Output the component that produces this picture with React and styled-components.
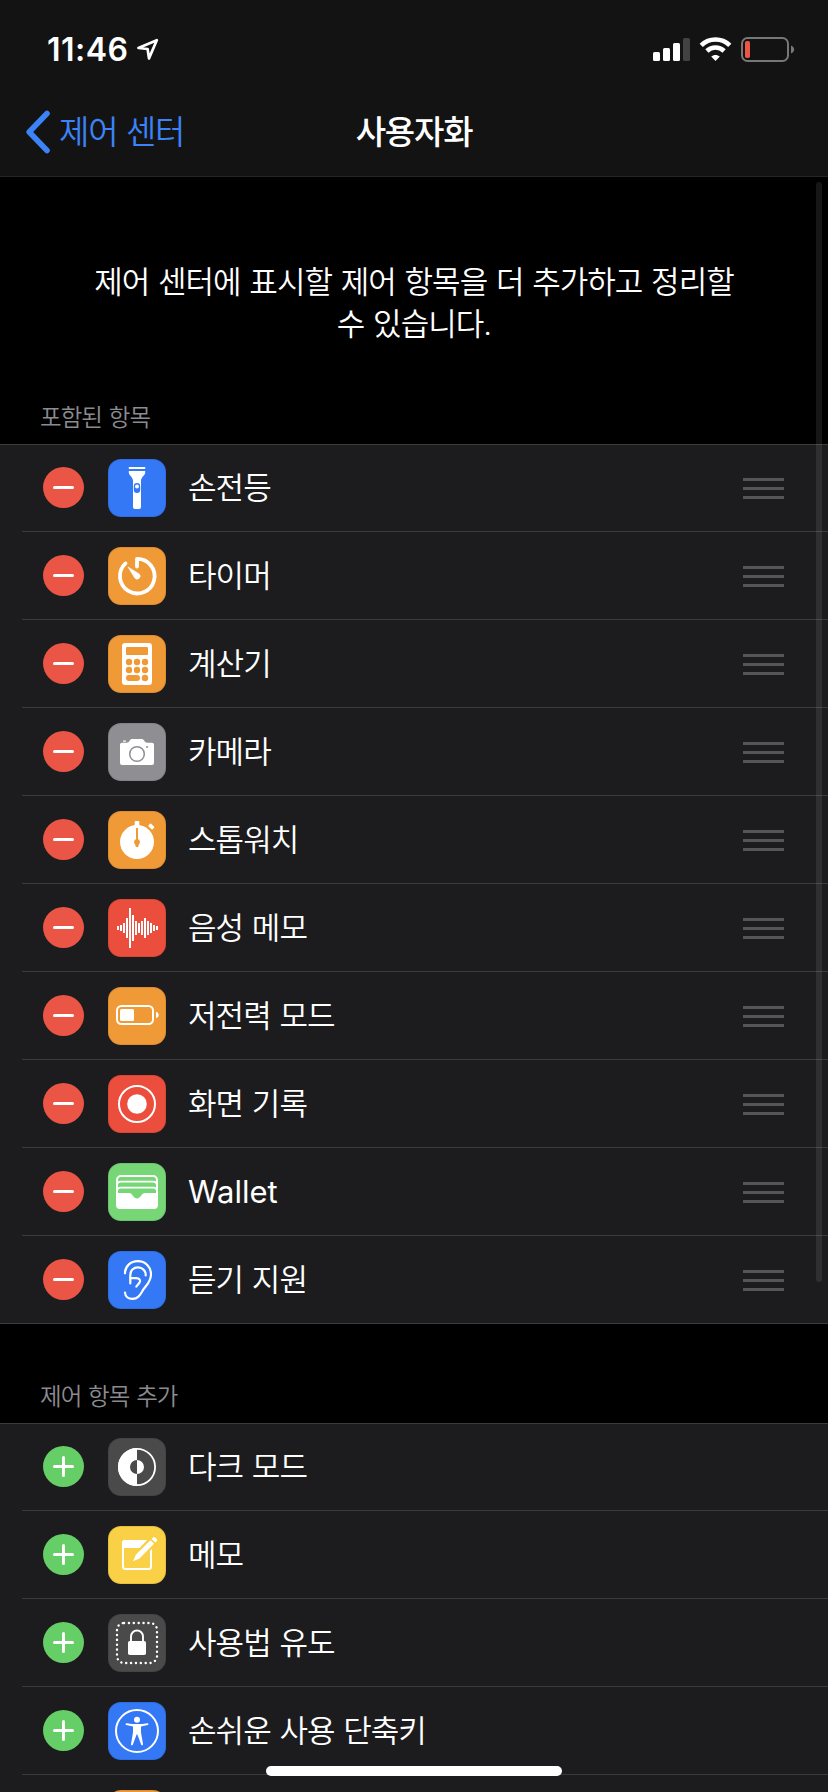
import React from 'react';
import styled, { createGlobalStyle } from 'styled-components';


const colors = {
	blue: '#3478f6',
	orange: '#f09a37',
	gray: '#8e8e93',
	red: '#eb4e3d',
	green: '#77d777',
	dark: '#4a4a4a',
	yellow: '#f9d046',
};

const waveBars = [2, 3, 5, 10, 20, 13, 7, 5, 7, 10, 7, 5, 3, 2];

const icons = {
	flashlight: (
		<>
			<rect x="20.8" y="8" width="16.4" height="2" rx="0.6" fill="#fff" />
			<path d="M20.8 12h16.4v1.2c0 3.4-4.2 4.6-4.2 8.8v26.2a1.8 1.8 0 0 1-1.8 1.8h-4.4a1.8 1.8 0 0 1-1.8-1.8V22c0-4.2-4.2-5.4-4.2-8.8z" fill="#fff" />
			<rect x="25.8" y="24" width="6.4" height="10" rx="3.2" fill={colors.blue} />
			<circle cx="29" cy="27.6" r="2" fill="#fff" />
		</>
	),
	timer: (
		<>
			<path d="M29 19.5V11.8A17.3 17.3 0 1 1 17.5 16.4" fill="none" stroke="#fff" strokeWidth="3.8" strokeLinecap="round" strokeLinejoin="round" />
			<path d="M20 20l11.2 6.9a3 3 0 0 1-4.3 4.3z" fill="#fff" stroke="#fff" strokeWidth="0.6" strokeLinejoin="round" />
		</>
	),
	calculator: (
		<>
			<rect x="14" y="8" width="30" height="42" rx="3.2" fill="#fff" />
			<g fill={colors.orange}>
				<rect x="18" y="12" width="22" height="8" rx="1" />
				{[27, 35].map((y) => [21, 29, 37].map((x) => <circle key={`${x}-${y}`} cx={x} cy={y} r="3.2" />))}
				<rect x="18" y="40" width="14" height="6" rx="3" />
				<circle cx="37" cy="43" r="3.2" />
			</g>
		</>
	),
	camera: (
		<>
			<path d="M14 19.8h4.5c1.8 0 2.4-.8 3.2-2.2.6-1.1 1.3-1.6 2.6-1.6h9.2c1.3 0 2 .5 2.7 1.6.8 1.4 1.5 2.2 3.3 2.2H44a2 2 0 0 1 2 2V40a2 2 0 0 1-2 2H14a2 2 0 0 1-2-2V21.8a2 2 0 0 1 2-2z" fill="#fff" />
			<rect x="15" y="17.4" width="3" height="1.4" rx="0.4" fill="#fff" />
			<circle cx="29" cy="31" r="7.3" fill="none" stroke={colors.gray} strokeWidth="1.5" />
			<circle cx="39" cy="24" r="1" fill={colors.gray} />
		</>
	),
	stopwatch: (
		<>
			<circle cx="29" cy="31" r="17" fill="#fff" />
			<rect x="26.7" y="10" width="4.6" height="6" rx="0.8" fill="#fff" />
			<rect x="40.5" y="13.7" width="5.6" height="3.6" rx="0.8" transform="rotate(43 43.3 15.5)" fill="#fff" />
			<path d="M28 17h2v11.2a3 3 0 0 1 1 5L30 36h-2l-1-2.8a3 3 0 0 1 1-5z" fill={colors.orange} />
		</>
	),
	voice: (
		<g fill="#fff">
			{waveBars.map((h, i) => <rect key={i} x={9 + i * 3} y={29 - h} width="2" height={h * 2} />)}
		</g>
	),
	battery: (
		<>
			<rect x="9" y="19" width="36" height="18" rx="4.5" fill="none" stroke="#fff" strokeWidth="2" />
			<rect x="12" y="22" width="14" height="12" rx="1.5" fill="#fff" />
			<path d="M48 24.8c3.6.9 3.6 5.5 0 6.4z" fill="#fff" />
		</>
	),
	record: (
		<>
			<circle cx="29" cy="29" r="18" fill="none" stroke="#fff" strokeWidth="2" />
			<circle cx="29" cy="29" r="9.8" fill="#fff" />
		</>
	),
	wallet: (
		<>
			<path d="M9 32V17a4 4 0 0 1 4-4h32a4 4 0 0 1 4 4v15" fill="none" stroke="#fff" strokeWidth="2" />
			<path d="M9 22.5c0-2.7 1.3-3.8 4-3.8h32c2.7 0 4 1.1 4 3.8M9 28.5c0-2.7 1.3-3.8 4-3.8h32c2.7 0 4 1.1 4 3.8" fill="none" stroke="#fff" strokeWidth="1.8" />
			<path d="M8 30h13c3.8 0 4 5.4 8 5.4s4.2-5.4 8-5.4h13v12a4 4 0 0 1-4 4H12a4 4 0 0 1-4-4z" fill="#fff" />
		</>
	),
	ear: (
		<g fill="none" stroke="#fff" strokeWidth="2.2" strokeLinecap="round" strokeLinejoin="round">
			<path d="M17 22.3C17 15.3 22.5 10.2 29.8 10.2c7.7 0 13.2 5.6 13.2 13.2 0 7-4.6 10.6-7.4 14.8-2.9 4.3-4.6 9.7-11.1 9.7-4.3 0-7.3-2.6-7.5-6.4" />
			<path d="M37.7 24.5c.3-4.7-3.1-8.2-7.7-8.2s-7.7 3.2-7.7 7.6V32.5" />
			<path d="M22.3 27.2h5.7c3.7 0 5.1 2.2 3.4 4.6L28.3 35.6" />
		</g>
	),
	darkMode: (
		<>
			<circle cx="29" cy="29" r="18.1" fill="none" stroke="#fff" strokeWidth="1.8" />
			<path d="M29 10a19 19 0 0 0 0 38V36a7 7 0 0 1 0-14z" fill="#fff" />
			<path d="M29 22a7 7 0 0 1 0 14z" fill="#fff" />
		</>
	),
	notes: (
		<>
			<rect x="15" y="15" width="28" height="28" rx="2.5" fill="none" stroke="#fff" strokeWidth="2" />
			<path d="M14 22v-5a3 3 0 0 1 3-3h24a3 3 0 0 1 3 3v5z" fill="#fff" />
			<path d="M24 36.5L28 27 45 9.5l5.5 5.5L33 32.5z" fill={colors.yellow} stroke={colors.yellow} strokeWidth="2" />
			<path d="M25 35.3l2.8-6.6 14.6-14.5 3.6 3.6-14.5 14.6zM43.6 13l1.5-1.4c1.6-1.6 5.2 1.9 3.6 3.6l-1.5 1.4z" fill="#fff" />
		</>
	),
	lock: (
		<>
			<rect x="9" y="9" width="40" height="40" rx="7" fill="none" stroke="#fff" strokeWidth="2.4" strokeLinecap="round" strokeDasharray="0.1 4.78" />
			<rect x="20" y="27" width="18" height="14" rx="1.8" fill="#fff" />
			<path d="M23 28v-5.5a6 6 0 0 1 12 0V28" fill="none" stroke="#fff" strokeWidth="1.9" />
		</>
	),
	accessibility: (
		<>
			<circle cx="29" cy="29" r="21" fill="none" stroke="#fff" strokeWidth="2" />
			<circle cx="29" cy="17.8" r="3" fill="#fff" />
			<path d="M18.6 21.2c7 1.2 13.8 1.2 20.8 0 1.2-.2 1.5 1.6.3 1.9l-6.7 1.3v6l2 11.6c.3 1.5-1.4 1.9-1.9.5l-3.7-10h-.8l-3.7 10c-.5 1.4-2.2 1-1.9-.5l2-11.6v-6l-6.7-1.3c-1.2-.3-.9-2.1.3-1.9z" fill="#fff" />
		</>
	),
};

const included = [
	{ label: '손전등', icon: 'flashlight', color: 'blue' },
	{ label: '타이머', icon: 'timer', color: 'orange' },
	{ label: '계산기', icon: 'calculator', color: 'orange' },
	{ label: '카메라', icon: 'camera', color: 'gray' },
	{ label: '스톱워치', icon: 'stopwatch', color: 'orange' },
	{ label: '음성 메모', icon: 'voice', color: 'red' },
	{ label: '저전력 모드', icon: 'battery', color: 'orange' },
	{ label: '화면 기록', icon: 'record', color: 'red' },
	{ label: 'Wallet', icon: 'wallet', color: 'green', latin: true },
	{ label: '듣기 지원', icon: 'ear', color: 'blue' },
];

const more = [
	{ label: '다크 모드', icon: 'darkMode', color: 'dark' },
	{ label: '메모', icon: 'notes', color: 'yellow' },
	{ label: '사용법 유도', icon: 'lock', color: 'dark' },
	{ label: '손쉬운 사용 단축키', icon: 'accessibility', color: 'blue' },
	{ label: '', icon: '', color: 'orange' },
];


const StatusBar = () => (
	<StatusBlock>
		<Time>11:46</Time>
		<svg width="24" height="24" viewBox="0 0 24 24">
			<path d="M2.4 11L20.8 3.2 13 21.4 11.6 12z" fill="none" stroke="#fff" strokeWidth="2.7" strokeLinejoin="round" />
		</svg>
		<StatusIcons width="142" height="26" viewBox="0 0 142 26">
			<g fill="#fff">
				<rect x="0" y="15" width="7" height="9" rx="1.5" />
				<rect x="10" y="11" width="7" height="13" rx="1.5" />
				<rect x="20" y="6" width="7" height="18" rx="1.5" />
				<rect x="30" y="1" width="7" height="23" rx="1.5" fill="#424242" />
				<path d="M62.5 24l-4.3-4.4c2.4-2.2 6.2-2.2 8.6 0z" />
			</g>
			<g fill="none" stroke="#fff">
				<path d="M48.2 8.3c8-7.7 20.6-7.7 28.6 0" strokeWidth="4.6" />
				<path d="M53.9 14c4.9-4.6 12.3-4.6 17.2 0" strokeWidth="4.6" />
			</g>
			<rect x="89" y="1" width="46" height="23" rx="5.5" fill="none" stroke="#777" strokeWidth="2" />
			<rect x="92" y="4" width="5" height="17" rx="1.8" fill="#eb5545" />
			<path d="M138 8.5c4.2 1.5 4.2 6.5 0 8z" fill="#777" />
		</StatusIcons>
	</StatusBlock>
);

const ItemRow = ({ item, type }) => (
	<Row>
		<ToggleIcon viewBox="0 0 42 42">
			<circle cx="20.5" cy="20.5" r="20.5" fill={type === 'add' ? '#65ce66' : '#eb5545'} />
			<rect x="10" y="19" width="21" height="3" rx="1.5" fill="#fff" />
			{type === 'add' ? <rect x="19" y="10" width="3" height="21" rx="1.5" fill="#fff" /> : ''}
		</ToggleIcon>
		<AppIcon $color={colors[item.color]}>
			<svg width="58" height="58" viewBox="0 0 58 58">{icons[item.icon]}</svg>
		</AppIcon>
		<Label $latin={item.latin}>{item.label}</Label>
		{type === 'remove' ? (
			<Handle>
				<span />
				<span />
				<span />
			</Handle>
		) : ''}
	</Row>
);

const App = () => {
	return (
		<Screen>
			<GlobalStyle />
			<Header>
				<StatusBar />
				<NavBar>
					<BackButton>
						<svg width="26" height="44" viewBox="0 0 26 44">
							<path d="M22 3.5L4.2 22l17.8 18.5" fill="none" stroke="#3b83f7" strokeWidth="5.6" strokeLinecap="round" strokeLinejoin="round" />
						</svg>
						<span>제어 센터</span>
					</BackButton>
					<Title>사용자화</Title>
				</NavBar>
			</Header>

			<Description>
				제어 센터에 표시할 제어 항목을 더 추가하고 정리할
				<br />
				수 있습니다.
			</Description>

			<SectionTitle>포함된 항목</SectionTitle>
			<List>
				{included.map((item) => <ItemRow key={item.icon} item={item} type="remove" />)}
			</List>

			<SectionTitle $second>제어 항목 추가</SectionTitle>
			<List>
				{more.map((item) => <ItemRow key={item.label} item={item} type="add" />)}
			</List>

			<ScrollBar />
			<HomeIndicator />
		</Screen>
	);
};

const GlobalStyle = createGlobalStyle`
	* {
		box-sizing: border-box;
	}

	body {
		margin: 0;
		background: #000;
	}
`;

const Screen = styled.div`
	position: relative;
	width: 828px;
	height: 1792px;
	overflow: hidden;
	background: #000;
	color: #fff;
	font-family: Inter, "Noto Sans CJK KR", sans-serif;
	font-size: 31px;
	font-weight: 350;
	letter-spacing: -0.95px;
	word-spacing: 0.9px;
`;

const Header = styled.header`
	height: 177px;
	background: #131313;
	border-bottom: 1px solid #262628;
`;

const StatusBlock = styled.div`
	height: 88px;
	display: flex;
	align-items: flex-start;
	padding: 37px 33px 0 47px;

	& > svg {
		flex: none;
		margin-left: 7px;
	}
`;

const Time = styled.div`
	width: 82px;
	line-height: 26px;
	font-size: 32px;
	font-weight: 600;
	letter-spacing: 0.5px;
	white-space: nowrap;
`;

const StatusIcons = styled.svg`
	&& {
		margin-left: auto;
	}
`;

const NavBar = styled.nav`
	height: 88px;
	display: grid;
	grid-template-columns: 1fr auto 1fr;
	align-items: center;
	font-size: 33px;
	letter-spacing: -1.2px;
	word-spacing: 0.5px;
`;

const BackButton = styled.button`
	display: flex;
	align-items: center;
	gap: 8px;
	padding: 0 0 0 25px;
	border: none;
	background: transparent;
	color: #3b83f7;
	font: inherit;
	letter-spacing: inherit;
	word-spacing: inherit;
	cursor: pointer;

	span {
		padding-bottom: 4px;
	}
`;

const Title = styled.h1`
	margin: 0;
	padding-bottom: 4px;
	font-size: inherit;
	font-weight: 500;
`;

const Description = styled.p`
	height: 212px;
	margin: 0;
	padding-top: 84px;
	line-height: 42px;
	text-align: center;
	white-space: nowrap;
`;

const SectionTitle = styled.h2`
	height: ${(props) => (props.$second ? '99px' : '55px')};
	display: flex;
	align-items: flex-end;
	margin: 0;
	padding: 0 40px 8px;
	color: #8b8b90;
	font-size: 23.5px;
	font-weight: inherit;
	line-height: 36px;
	letter-spacing: -0.95px;
	word-spacing: 1.1px;
`;

const Row = styled.li`
	position: relative;
	height: 88px;
	display: flex;
	align-items: center;
	padding: 1px 44px 1px 43px;

	&::after {
		content: "";
		position: absolute;
		left: 22px;
		right: 0;
		bottom: 0;
		height: 1px;
		background: #3b3b3d;
	}

	&:first-child {
		height: 87px;
		padding-top: 0;
	}

	&:last-child::after {
		left: 0;
	}
`;

const List = styled.ul`
	margin: 0;
	padding: 0;
	list-style: none;
	background: #1c1c1e;
	border-top: 1px solid #3b3b3d;
`;

const ToggleIcon = styled.svg`
	flex: none;
	width: 42px;
	height: 42px;
	margin-right: 23px;
`;

const AppIcon = styled.div`
	flex: none;
	width: 58px;
	height: 58px;
	border-radius: 13px;
	background: ${(props) => props.$color};
	box-shadow: inset 0 0 0 1px rgba(0, 0, 0, .08);

	svg {
		display: block;
	}
`;

const Label = styled.span`
	flex: 1;
	margin-left: 22px;
	padding-bottom: 1px;
	line-height: 44px;
	font-weight: ${(props) => (props.$latin ? 400 : 'inherit')};
	letter-spacing: ${(props) => (props.$latin ? '0' : 'inherit')};
`;

const Handle = styled.div`
	width: 41px;
	display: flex;
	flex-direction: column;
	gap: 6px;
	padding-top: 1px;

	span {
		height: 3px;
		background: #555557;
	}
`;

const ScrollBar = styled.div`
	position: absolute;
	top: 182px;
	right: 6px;
	width: 6px;
	height: 1100px;
	border-radius: 3px;
	background: rgba(255, 255, 255, .085);
`;

const HomeIndicator = styled.div`
	position: absolute;
	left: 266px;
	bottom: 16px;
	width: 296px;
	height: 10px;
	border-radius: 5px;
	background: #fff;
`;

export default App;
